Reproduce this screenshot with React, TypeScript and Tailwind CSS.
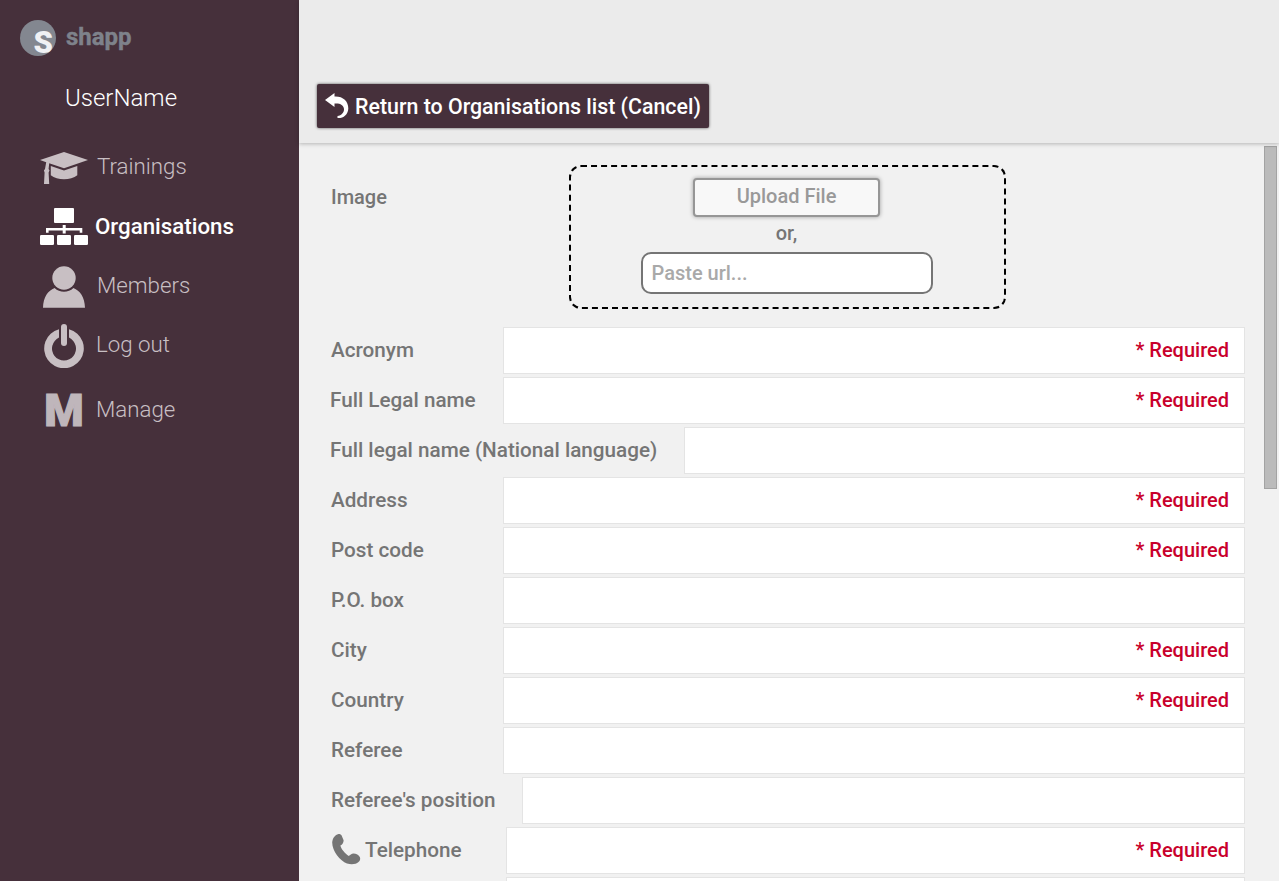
import type { ReactNode } from 'react';

type Field = { label: string; labelClass?: string; icon?: boolean; required?: boolean };

const fields: Field[] = [
  { label: 'Acronym', required: true },
  { label: 'Full Legal name', labelClass: 'w-[173px] -ml-px', required: true },
  { label: 'Full legal name (National language)', labelClass: 'w-[354px] -ml-px' },
  { label: 'Address', required: true },
  { label: 'Post code', required: true },
  { label: 'P.O. box' },
  { label: 'City', required: true },
  { label: 'Country', required: true },
  { label: 'Referee' },
  { label: "Referee's position", labelClass: 'w-[191px]' },
  { label: 'Telephone', labelClass: 'w-[175px]', icon: true, required: true },
  { label: '', labelClass: 'w-[175px]' },
];

function CapIcon() {
  return (
    <svg width="48" height="33" viewBox="0 0 48 33" fill="currentColor" className="mt-[2px]">
      <path d="M0 8 24 0l24 8-24 8.2L9.2 11.2 8.600 17l.9 1.600-.9 2 .6 11.400H4l.6-11.400-.7-2L5 17l1.200-6.800z" />
      <path d="M10.800 14 24 18.600 37.300 14v9.300C34 26 29 27.200 24 27.200s-10-1.200-13.200-3.900z" />
    </svg>
  );
}

function TreeIcon() {
  return (
    <svg width="48" height="37" viewBox="0 0 48 37" fill="currentColor" className="mb-[1px]">
      <rect x="14" y="0" width="20" height="15" rx="1" />
      <path d="M22.700 17h3v3h16.600v4.700h-2.600v-2.200h-14v3h-3v-3H8.600v2.200H6V20h16.700z" />
      <rect x="0" y="27" width="14" height="10" rx="1.300" />
      <rect x="17" y="27" width="14" height="10" rx="1.300" />
      <rect x="34" y="27" width="14" height="10" rx="1.300" />
    </svg>
  );
}

function PersonIcon() {
  return (
    <svg width="48" height="42" viewBox="0 0 48 42" fill="currentColor">
      <circle cx="24" cy="12" r="11.700" />
      <path d="M3 41.700C3.300 31 8 24.500 14.600 22c5 5 13.800 5 18.800 0C40 24.500 44.700 31 45 41.700z" />
    </svg>
  );
}

function PowerIcon() {
  return (
    <svg width="48" height="44" viewBox="0 0 48 44" fill="currentColor">
      <path d="M19 5.300v8.300a12 12 0 1 0 10 0V5.300a19.800 19.800 0 1 1-10 0z" />
      <rect x="21" y="0" width="6" height="22" rx="3" />
    </svg>
  );
}

function PhoneIcon() {
  return (
    <svg width="29" height="31" viewBox="0 0 29 31" fill="currentColor" className="-mt-[1px] ml-[1px] shrink-0">
      <path d="M6.500 0C3 1 .5 4 .2 8.500.2 17 8 27 15 29.500c4.500 1.200 9 .8 11.500-1.500 1.800-1.500 1.900-3.200 1.400-4.800-.8-2-3.900-3.700-6.400-3.700-2 0-3.500 1.500-4.700 2.600C13 19.500 9 15 8.400 11.600 10.400 10.500 11.700 8.500 11.600 6.200L9.500 1.300C8.700.2 7.700-.2 6.500 0z" />
    </svg>
  );
}

function NavItem({ icon, label, className, labelClass }: { icon: ReactNode; label: string; className: string; labelClass?: string }) {
  return (
    <a className={`flex items-center pl-10 ${className}`}>
      <span className="flex w-12 shrink-0 justify-center">{icon}</span>
      <span className={labelClass}>{label}</span>
    </a>
  );
}

export default function App() {
  return (
    <div className="flex h-[881px] w-[1279px] overflow-hidden bg-[#f1f1f1] font-['Roboto',sans-serif]">
      <aside className="w-[299px] shrink-0 bg-[#46303b]">
        <div className="flex h-[76px] items-center pl-5">
          <div className="flex h-9 w-9 justify-end rounded-full bg-[#838790]">
            <span className="mr-[3px] text-[31px] leading-[46px] font-black text-[#f0f1f4]">S</span>
          </div>
          <span className="ml-[10px] pb-[2px] text-[24px] leading-7 font-bold text-[#7e828b] [-webkit-text-stroke:0.4px_#7e828b]">shapp</span>
        </div>
        <div className="h-[61px] pt-[7px] pl-[65px] text-[24px] leading-[30px] font-light text-white">UserName</div>
        <nav className="flex flex-col text-[22.3px] font-light text-[#c8bfc3]">
          <NavItem icon={<CapIcon />} label="Trainings" className="h-[60px] gap-[9px]" />
          <NavItem icon={<TreeIcon />} label="Organisations" className="h-[60px] gap-[7px] font-medium text-white" />
          <NavItem icon={<PersonIcon />} label="Members" className="h-[59px] gap-[9px]" labelClass="pb-[2px]" />
          <NavItem icon={<PowerIcon />} label="Log out" className="h-[60px] gap-[8px]" labelClass="pb-[2px]" />
          <NavItem
            icon={
              <span className="text-[45px] leading-[48px] font-black text-[#bfb6bb] [-webkit-text-stroke:1.2px_#bfb6bb]">M</span>
            }
            label="Manage"
            className="h-[70px] gap-[8px]"
            labelClass="pb-[2px]"
          />
        </nav>
      </aside>
      <div className="flex min-w-0 flex-1 flex-col">
        <header className="relative h-[143px] shrink-0 bg-[#ebebeb] pt-[84px] pl-[18px] shadow-[0_1px_4px_rgba(0,0,0,0.25)]">
          <button className="flex h-11 w-[392px] items-center rounded-[2px] bg-[#46303b] pl-2 text-[21.36px] font-medium whitespace-nowrap text-white shadow-[0_0_3px_rgba(0,0,0,0.65)]">
            <svg width="24" height="26" viewBox="0 0 24 26" fill="currentColor" className="mr-[6px] mb-[1px] shrink-0">
              <path d="M0 7 9.500 0v3.500C17.500 3 23.500 8 23.300 15.500 23 22 18 25.500 12.500 25v-2c4-.6 6.700-3.500 6.500-7-.3-4-4-6-9.500-5.500V14z" />
            </svg>
            <span className="pt-[2px]">Return to Organisations list (Cancel)</span>
          </button>
        </header>
        <main className="flex min-h-0 flex-1 text-[20px] font-medium text-[#757575]">
          <div className="flex w-[965px] flex-col pl-8">
            <div className="flex h-[184px] shrink-0 pt-[22px]">
              <span className="w-[238px] pt-[17px] leading-[30px]">Image</span>
              <div className="flex h-[144px] w-[437px] flex-col items-center rounded-[12px] border-2 border-dashed border-black pt-[11px] pr-[2px]">
                <button className="h-[39px] w-[187px] rounded-[4px] border-2 border-[#969696] bg-[#f8f8f8] pb-[2px] leading-[33px] text-[#999] shadow-[0_0_4px_rgba(0,0,0,0.35)]">
                  Upload File
                </button>
                <span className="h-[35px] leading-[33px]">or,</span>
                <input
                  placeholder="Paste url..."
                  className="h-[42px] w-[292px] rounded-[10px] border-2 border-[#757575] bg-white px-[9px] placeholder:text-[#a9a9a9]"
                />
              </div>
            </div>
            {fields.map((field, i) => (
              <div key={i} className="mb-[3px] flex h-[47px] w-[914px] shrink-0 items-center">
                <label
                  className={`flex shrink-0 items-center gap-1 pb-px text-[20.7px] leading-[30px] whitespace-nowrap ${field.labelClass ?? 'w-[172px]'}`}
                >
                  {field.icon && <PhoneIcon />}
                  {field.label}
                </label>
                <div className="flex h-[47px] flex-1 items-center justify-end border border-[#e4e4e4] bg-white pr-[15px] pb-px text-[#c9002b]">
                  {field.required && '* Required'}
                </div>
              </div>
            ))}
          </div>
          <div className="mt-[3px] h-[343px] w-[13px] border border-[#a3a3a3] bg-[#bbb]" />
        </main>
      </div>
    </div>
  );
}
